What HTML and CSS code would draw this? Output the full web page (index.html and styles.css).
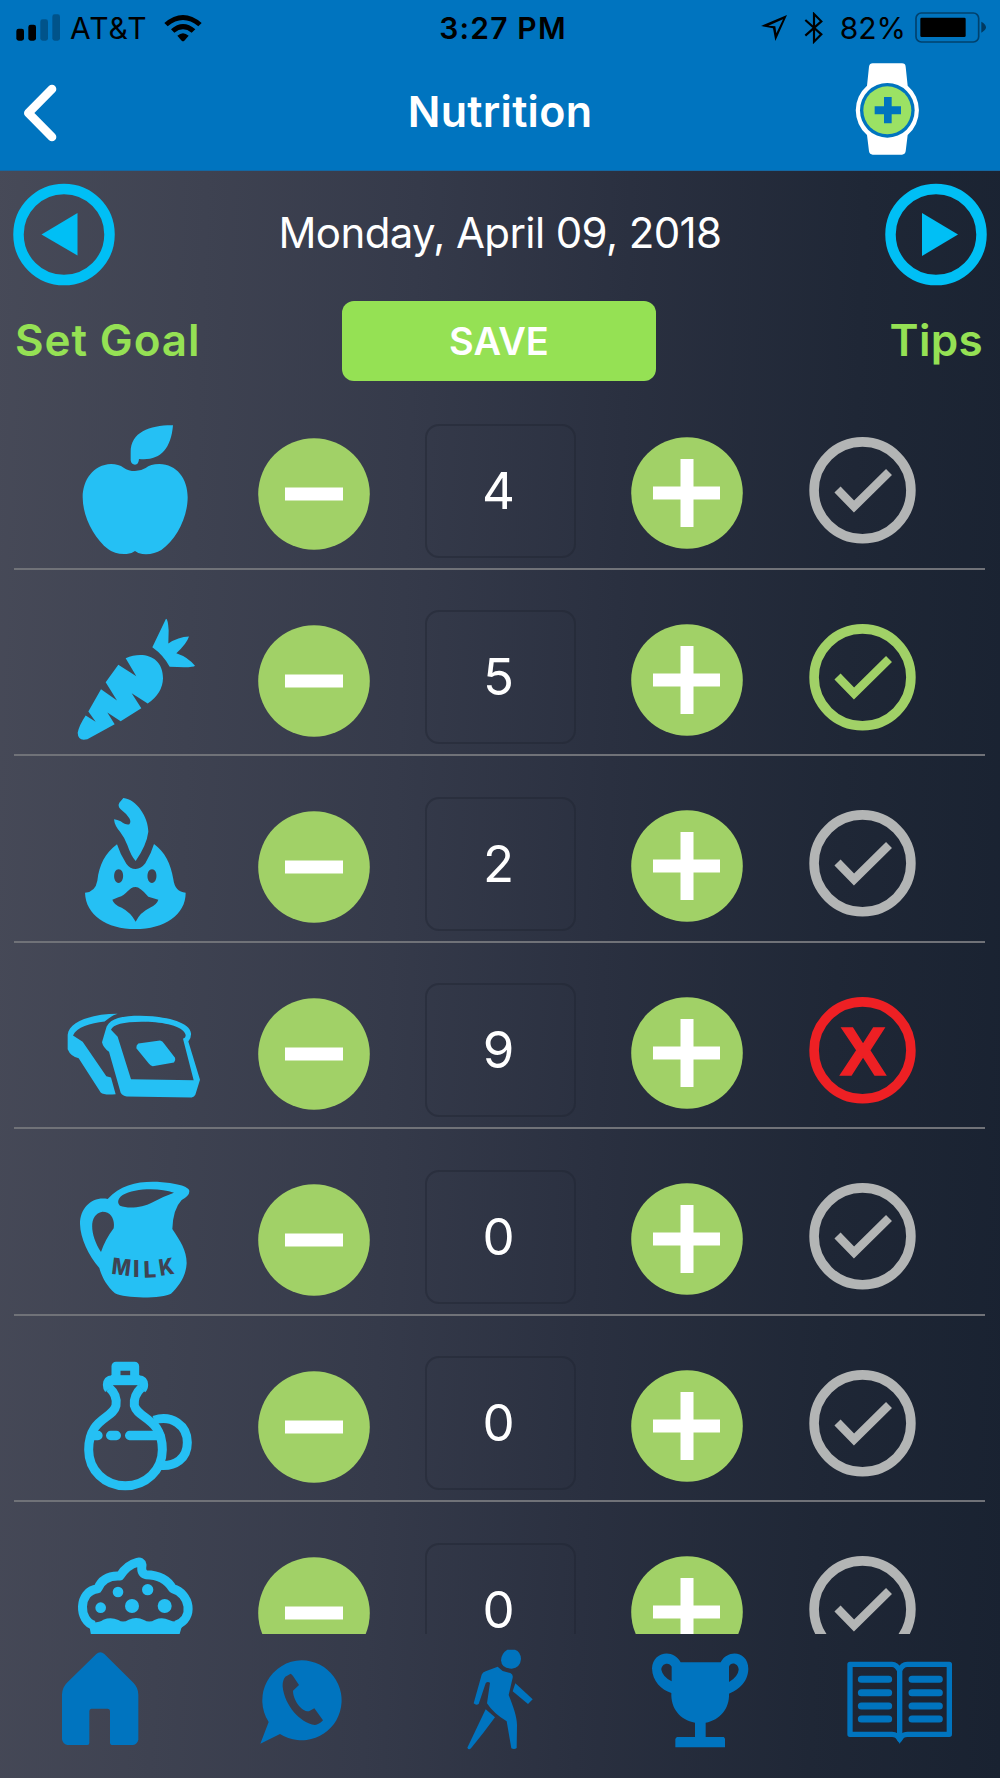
FILE: index.html
```
<!DOCTYPE html>
<html lang="en">
<head>
  <meta charset="UTF-8">
  <meta name="viewport" content="width=device-width, initial-scale=1.0">
  <title>Nutrition</title>
  <link rel="stylesheet" href="styles.css">
</head>
<body>
  <!-- shared symbols -->
  <svg class="symbols">
    <symbol id="minus" viewBox="0 0 112 112">
      <circle cx="56" cy="56" r="55.8" fill="#a1d167"/>
      <rect x="27" y="49.5" width="58" height="13" fill="#fff"/>
    </symbol>
    <symbol id="plus" viewBox="0 0 112 112">
      <circle cx="56" cy="56" r="55.8" fill="#a1d167"/>
      <path d="M49.5 22h13v68h-13zM22 49.5h67v13H22z" fill="#fff"/>
    </symbol>
    <symbol id="check" viewBox="0 0 107 107">
      <circle cx="53.5" cy="53.3" r="48.4" fill="none" stroke="currentColor" stroke-width="9.6"/>
      <path d="M28.5 52.5L45 69.5L80 35" fill="none" stroke="currentColor" stroke-width="8.5"/>
    </symbol>
  </svg>

  <header class="header">
    <div class="status">
      <div class="status-left">
        <svg width="45" height="27" viewBox="48 40 135 81">
          <rect x="49" y="84" width="23" height="36" rx="7"/>
          <rect x="85" y="72" width="23" height="48" rx="7"/>
          <rect x="121" y="56" width="23" height="64" rx="7" fill="#00538a"/>
          <rect x="157" y="41" width="23" height="79" rx="7" fill="#00538a"/>
        </svg>
        <span class="carrier">AT&amp;T</span>
        <svg width="38" height="28" viewBox="491 38 114 84">
          <path d="M492 65Q548 17 604 65L594 75Q548 37 502 75Z"/>
          <path d="M512 84Q548 52 585 84L574 94Q548 74 522 94Z"/>
          <path d="M531 103Q548 88 565 103L552 118Q548 122 544 118Z"/>
        </svg>
      </div>
      <div class="time">3:27 PM</div>
      <div class="status-right">
        <svg width="27" height="28" viewBox="790 41 81 84">
          <path fill-rule="evenodd" d="M868 44L790 77L826 84L833 122ZM856 57L836 99L833 78L812 76Z"/>
        </svg>
        <svg class="bluetooth" width="20" height="32" viewBox="914 33 60 96">
          <path d="M918 57L966 100L944 122V39L966 61L918 104" fill="none" stroke="#000" stroke-width="6.500"/>
        </svg>
        <span class="percent">82%</span>
        <svg width="71" height="31" viewBox="1244 36 213 93">
          <rect x="1247" y="39" width="188" height="87" rx="16" fill="none" stroke="#00416d" stroke-width="5"/>
          <rect x="1260" y="53" width="136" height="58" rx="4"/>
          <path d="M1443 65Q1457 73 1457 82Q1457 91 1443 98Z" fill="#003a61"/>
        </svg>
      </div>
    </div>
    <div class="titlebar">
      <svg class="back" width="34" height="58" viewBox="70 249 102 174">
        <path d="M157 264L86 336L157 408" fill="none" stroke="#fff" stroke-width="26" stroke-linecap="round" stroke-linejoin="round"/>
      </svg>
      <h1>Nutrition</h1>
      <svg class="watch" width="66" height="92" viewBox="1064 189 198 276">
        <path d="M1120 190H1208Q1218 190 1219 200L1225 257A98 98 0 0 1 1225 405L1219 454Q1217 464 1208 464H1120Q1111 464 1109 454L1103 405A98 98 0 0 1 1103 257L1109 200Q1111 190 1120 190Z" fill="#fff"/>
        <circle cx="1164" cy="331" r="82" fill="#0074bf"/>
        <circle cx="1164" cy="331" r="72" fill="#9be264"/>
        <path d="M1154 291h23v28h28v24h-28v27h-23v-27h-28v-24h28z" fill="#0074bf"/>
      </svg>
    </div>
  </header>

  <div class="date-row">
    <svg width="102" height="103" viewBox="0 0 102 103">
      <circle cx="51" cy="51.5" r="45.5" fill="none" stroke="#00bff5" stroke-width="10.5"/>
      <path d="M28.5 51.5L64.5 30V72.500Z" fill="#00bff5"/>
    </svg>
    <div class="date">Monday, April 09, 2018</div>
    <svg width="102" height="103" viewBox="0 0 102 103">
      <circle cx="51" cy="51.5" r="45.5" fill="none" stroke="#00bff5" stroke-width="10.5"/>
      <path d="M73 51.500L37 30V73Z" fill="#00bff5"/>
    </svg>
  </div>

  <div class="action-row">
    <a class="link goal">Set Goal</a>
    <button class="save">SAVE</button>
    <a class="link tips">Tips</a>
  </div>

  <main class="list">
    <!-- fruit -->
    <div class="row">
      <svg class="food" viewBox="192 -51 420 549">
        <path d="M405 213Q423 213 437 204Q451 192 478 192C530 193 563 235 563 292C563 350 530 418 484 450Q460 465 427 462Q414 460 405 453Q396 461 380 462Q345 464 325 448C282 415 248 350 248 292C248 240 280 194 333 192Q356 192 371 203Q385 213 405 213Z"/>
        <path d="M519 76C452 75 392 95 392 157V181Q394 194 405 194Q416 194 417 177C477 184 513 150 519 76Z"/>
      </svg>
      <svg class="minus"><use href="#minus"/></svg>
      <div class="count">4</div>
      <svg class="plus"><use href="#plus"/></svg>
      <svg class="state"><use href="#check"/></svg>
    </div>
    <!-- vegetables -->
    <div class="row">
      <svg class="food" viewBox="192 508.500 420 549">
        <path d="M498 655Q504 656 506 690L505 729Q535 709 567 708Q560 730 529 758Q565 770 585 796Q580 803 509 799Q492 765 457 740Z"/>
        <path d="M377 773C430 750 489 768 489 833Q488 878 443 909L395 878L424 923L362 962L322 936L344 971L262 1016Q234 1023 233 997Q237 975 257 945L287 964L265 933L303 866L351 900L317 845L355 793L409 827Z"/>
      </svg>
      <svg class="minus"><use href="#minus"/></svg>
      <div class="count">5</div>
      <svg class="plus"><use href="#plus"/></svg>
      <svg class="state ok"><use href="#check"/></svg>
    </div>
    <!-- poultry -->
    <div class="row">
      <svg class="food" viewBox="72 -72 420 549">
        <path d="M250 54C290 58 325 112 325 155Q320 195 287 243Q274 230 262 195Q252 170 240 155Q224 138 222 118Q232 120 242 124Q258 136 268 133Q274 126 268 115Q258 100 242 88Q232 78 238 68Z"/>
        <path fill-rule="evenodd" d="M231 193Q240 222 259 251Q270 267 287 267Q303 267 316 250Q334 220 342 192C375 216 392 250 400 298Q405 337 437 338C437 405 373 447 286 447C200 447 137 405 135 338Q166 336 172 302C178 254 195 220 231 193ZM236 268C218 268 218 308 236 309C254 308 254 268 236 268ZM336 268C318 268 318 308 336 309C354 308 354 268 336 268ZM287 321C265 321 262 345 235 352L217 359Q222 375 245 383Q272 397 287 425Q300 397 330 383Q351 373 355 359L325 350Q300 321 287 321Z"/>
      </svg>
      <svg class="minus"><use href="#minus"/></svg>
      <div class="count">2</div>
      <svg class="plus"><use href="#plus"/></svg>
      <svg class="state"><use href="#check"/></svg>
    </div>
    <!-- bread -->
    <div class="row">
      <svg class="food" viewBox="72 487.500 420 549">
        <path d="M233 700Q215 705 194 723C150 728 110 740 99 765L128 784L199 887L213 891L227 941Q193 945 182 936L116 833Q92 828 83 806V763C87 725 150 700 233 700Z"/>
        <path fill-rule="evenodd" d="M300 706C370 706 450 723 453 758Q454 773 445 783L480 898L466 943Q463 950 455 951L260 948Q248 947 242 937L207 814Q189 800 186 785L197 748C203 714 245 706 300 706ZM305 724C250 724 219 732 213 748L233 769L273 896L461 899L429 775Q442 770 434 757C420 733 360 724 305 724Z"/>
        <path d="M295 789L360 780Q368 782 372 789L405 832Q408 840 402 846L338 857Q331 856 327 850L289 803Q288 794 295 789Z"/>
      </svg>
      <svg class="minus"><use href="#minus"/></svg>
      <div class="count">9</div>
      <svg class="plus"><use href="#plus"/></svg>
      <svg class="state bad" viewBox="0 0 107 107">
        <circle cx="53.5" cy="53.3" r="48.4" fill="none" stroke="currentColor" stroke-width="9.6"/>
        <text x="54" y="77.5" text-anchor="middle">X</text>
      </svg>
    </div>
    <!-- milk -->
    <div class="row">
      <svg class="food" viewBox="72 -63 420 549">
        <path fill-rule="evenodd" d="M203 147C240 106 290 94 345 95C380 96 437 103 447 119Q453 134 425 150Q399 177 397 237C420 272 440 300 440 340C438 380 415 410 393 431C370 445 255 447 225 430C200 408 185 380 178 354C145 315 121 265 120 222C120 170 160 138 203 147ZM402 128C360 112 282 114 248 135C234 144 230 158 240 167C265 177 310 172 335 158Q365 141 402 128ZM221 235C225 210 215 185 187 185C145 192 149 255 183 306Q196 268 221 235Z"/>
        <g class="milk">
          <text x="213" y="371" textLength="57" lengthAdjust="spacingAndGlyphs" transform="rotate(7 213 371)">M</text>
          <text x="279" y="382">I</text>
          <text x="311" y="383" transform="rotate(-2 311 383)">L</text>
          <text x="361" y="378" textLength="45" lengthAdjust="spacingAndGlyphs" transform="rotate(-9 361 378)">K</text>
        </g>
      </svg>
      <svg class="minus"><use href="#minus"/></svg>
      <div class="count">0</div>
      <svg class="plus"><use href="#plus"/></svg>
      <svg class="state"><use href="#check"/></svg>
    </div>
    <!-- oil -->
    <div class="row">
      <svg class="food line" viewBox="72 496.500 420 549">
        <path d="M228 688V647H284V688" stroke-width="27"/>
        <path d="M213 689H299" stroke-width="30"/>
        <path d="M206 716Q202 711 202 703Q202 688 216 688M306 716Q311 711 311 703Q311 688 297 688" stroke-width="27"/>
        <path d="M208 712C229 730 230 752 228 765C220 805 146 802 146 898C146 960 195 1006 256 1006C317 1006 367 960 367 898C367 802 293 805 283 765Q280 735 304 712" stroke-width="27"/>
        <path d="M342 809C395 792 442 825 442 876C442 925 405 948 362 945" stroke-width="27"/>
        <path d="M160 855H174M212 855H229M269 855H360" stroke-width="28" stroke-linecap="round"/>
      </svg>
      <svg class="minus"><use href="#minus"/></svg>
      <div class="count">0</div>
      <svg class="plus"><use href="#plus"/></svg>
      <svg class="state"><use href="#check"/></svg>
    </div>
    <!-- sweets -->
    <div class="row">
      <svg class="food line" viewBox="72 -54 420 549">
        <path d="M163 316C115 305 113 213 173 206Q190 165 240 168Q260 135 292 127Q304 124 306 135Q302 160 318 164Q375 165 398 206C450 220 465 295 408 316" stroke-width="27"/>
        <path class="solid" d="M146 306Q175 310 190 299Q213 290 235 300Q249 310 266 299Q290 289 312 300Q328 310 345 299Q367 290 387 300Q400 308 430 304L418 345H153Z"/>
        <circle class="solid" cx="234" cy="216" r="16"/>
        <circle class="solid" cx="323" cy="209" r="17"/>
        <circle class="solid" cx="182" cy="263" r="16"/>
        <circle class="solid" cx="276" cy="258" r="21"/>
        <circle class="solid" cx="374" cy="258" r="21"/>
      </svg>
      <svg class="minus"><use href="#minus"/></svg>
      <div class="count">0</div>
      <svg class="plus"><use href="#plus"/></svg>
      <svg class="state"><use href="#check"/></svg>
    </div>
  </main>

  <nav class="tabs">
    <a>
      <svg width="78" height="144" viewBox="65 342 234 432">
        <path d="M171 402Q183 391 195 402L282 488Q297 503 297 524V659Q294 672 281 675H217Q212 674 212 668V572Q211 566 205 566H156Q150 567 150 573V668Q150 675 144 675H84Q70 672 68 658V524Q68 503 83 488Z"/>
      </svg>
    </a>
    <a>
      <svg width="85" height="144" viewBox="655 342 255 432">
        <path fill-rule="evenodd" d="M786 421A120 120 0 1 1 721 642L662 671L687 606A120 120 0 0 1 786 421ZM737 470L753 461Q757 463 760 468L778 495L760 512C760 540 785 575 808 574L824 565L850 601Q838 614 826 615C780 608 735 555 729 500Q728 480 737 470Z"/>
      </svg>
    </a>
    <a>
      <svg width="70" height="144" viewBox="195 342 210 432">
        <path d="M322 389H345Q362 395 363 417Q361 443 335 446Q305 446 303 421Q304 400 322 389Z"/>
        <path d="M293 440L308 453L331 459Q340 463 338 473L326 525C340 560 351 590 351 615L350 684Q343 690 334 685L320 604Q280 580 261 550L270 488Q262 483 257 490L236 552Q228 557 221 550L245 464Q248 456 257 454Z"/>
        <path d="M346 490L398 538L384 552L338 514Z"/>
        <path d="M257 568L285 592Q250 640 213 685Q206 691 202 683Z"/>
      </svg>
    </a>
    <a>
      <svg width="100" height="144" viewBox="750 342 300 432">
        <path fill-rule="evenodd" d="M842 427H962C985 385 1045 395 1045 447C1044 490 1010 512 987 521C989 565 960 600 917 608V651H971Q975 653 975 658V682H826V658Q827 652 832 651H885V608C840 600 812 565 814 519C785 510 757 485 756 445C758 395 820 385 842 427ZM815 484V440C808 425 784 430 784 449Q788 470 815 484ZM987 486Q1014 470 1016 449C1015 428 992 424 987 440Z"/>
      </svg>
    </a>
    <a>
      <svg width="108" height="144" viewBox="198 342 324 432">
        <path class="book" d="M359 650V452Q350 433 336 433H210V643H336Q352 643 359 658Q366 643 382 643H508V433H382Q366 433 359 452"/>
        <path d="M343 646H375L359 671Z"/>
        <path class="book-lines" d="M244 478H326M244 518H326M244 558H326M244 597H326M396 478H478M396 518H478M396 558H478M396 597H478"/>
      </svg>
    </a>
  </nav>
</body>
</html>
```
FILE: styles.css
```
* {
  box-sizing: border-box;
}
body {
  margin: 0;
  width: 1000px;
  height: 1778px;
  overflow: hidden;
  display: flex;
  flex-direction: column;
  background: linear-gradient(92deg, #474a58 0%, #353a4a 40%, #2a3040 60%, #1f2736 82%, #192231 100%);
  color: #fff;
  font-family: Inter, "Liberation Sans", sans-serif;
}
svg {
  display: block;
  flex: none;
}
.symbols {
  position: absolute;
  width: 0;
  height: 0;
}

/* header */
.header {
  height: 171px;
  background: #0074bf;
  border-bottom: 1px solid #1467a2;
}
.status {
  display: grid;
  grid-template-columns: 1fr auto 1fr;
  align-items: center;
  height: 55px;
  padding: 0 14px 0 16px;
  color: #000;
  font-size: 30px;
}
.status-left,
.status-right {
  display: flex;
  align-items: center;
}
.status-right {
  justify-content: flex-end;
}
.carrier {
  margin: 0 16px 0 9px;
  letter-spacing: 1px;
}
.time {
  font-weight: 600;
  letter-spacing: 1.2px;
  padding-left: 4px;
}
.bluetooth {
  margin: 0 16px 0 16px;
}
.percent {
  margin-right: 9px;
}
.titlebar {
  display: grid;
  grid-template-columns: 1fr auto 1fr;
  align-items: center;
  height: 115px;
  padding: 0 23px;
}
.titlebar h1 {
  margin: 0 0 3px;
  font-size: 43px;
  font-weight: 600;
  letter-spacing: 0.3px;
}
.watch {
  justify-self: end;
  margin: 0 57px 7px 0;
}

/* date and actions */
.date-row {
  display: flex;
  align-items: center;
  justify-content: space-between;
  height: 103px;
  margin-top: 12px;
  padding: 0 13px;
}
.date {
  font-size: 42px;
  letter-spacing: -0.6px;
  margin-bottom: 4px;
}
.action-row {
  display: grid;
  grid-template-columns: 1fr 314px 1fr;
  align-items: center;
  height: 80px;
  margin-top: 15px;
  padding: 0 17px 0 15px;
}
.link {
  color: #95e154;
  font-size: 44px;
  font-weight: 600;
  letter-spacing: 0.9px;
  margin-bottom: 3px;
}
.tips {
  text-align: right;
  letter-spacing: 0.3px;
}
.save {
  height: 80px;
  padding: 0;
  border: none;
  border-radius: 12px;
  background: #95e154;
  color: #fff;
  font-family: inherit;
  font-size: 38px;
  font-weight: 600;
}

/* food list */
.list {
  height: 1250.5px;
  margin-top: 2px;
  overflow: hidden;
}
.row {
  display: flex;
  align-items: flex-start;
  height: 186.5px;
  margin: 0 15px 0 14px;
  padding-left: 50px;
  border-bottom: 2px solid #707278;
}
.food {
  width: 140px;
  height: 183px;
  fill: #25c0f4;
}
.food.line {
  fill: none;
  stroke: #25c0f4;
  stroke-linejoin: round;
}
.food .solid {
  fill: #25c0f4;
  stroke: none;
}
.milk {
  fill: #3f4352;
  font-size: 68px;
  font-weight: 800;
}
.minus,
.plus {
  width: 112px;
  height: 112px;
}
.minus {
  margin: 55px 54.5px 0 54px;
}
.plus {
  margin: 54px 66px 0 55px;
}
.count {
  display: flex;
  align-items: center;
  justify-content: center;
  width: 151px;
  height: 134px;
  margin-top: 40.5px;
  padding-right: 3px;
  border: 2px solid rgba(30, 35, 48, 0.4);
  border-radius: 14px;
  font-size: 51px;
  line-height: 0.9;
}
.state {
  width: 107px;
  height: 107px;
  margin-top: 54px;
  color: #b3b5b5;
}
.state.ok {
  color: #a1d167;
}
.state.bad {
  color: #ee2024;
}
.bad text {
  fill: currentColor;
  stroke: currentColor;
  stroke-width: 1.5px;
  font-family: "Liberation Sans", Arial, sans-serif;
  font-size: 69px;
  font-weight: 700;
}

/* bottom tabs */
.tabs {
  display: flex;
  height: 144px;
}
.tabs a {
  flex: 1;
  display: flex;
  justify-content: center;
}
.tabs svg {
  fill: #0074bf;
}
.tabs .book,
.tabs .book-lines {
  fill: none;
  stroke: #0074bf;
}
.tabs .book {
  stroke-width: 16;
  stroke-linejoin: round;
}
.tabs .book-lines {
  stroke-width: 21;
  stroke-linecap: round;
}
```
